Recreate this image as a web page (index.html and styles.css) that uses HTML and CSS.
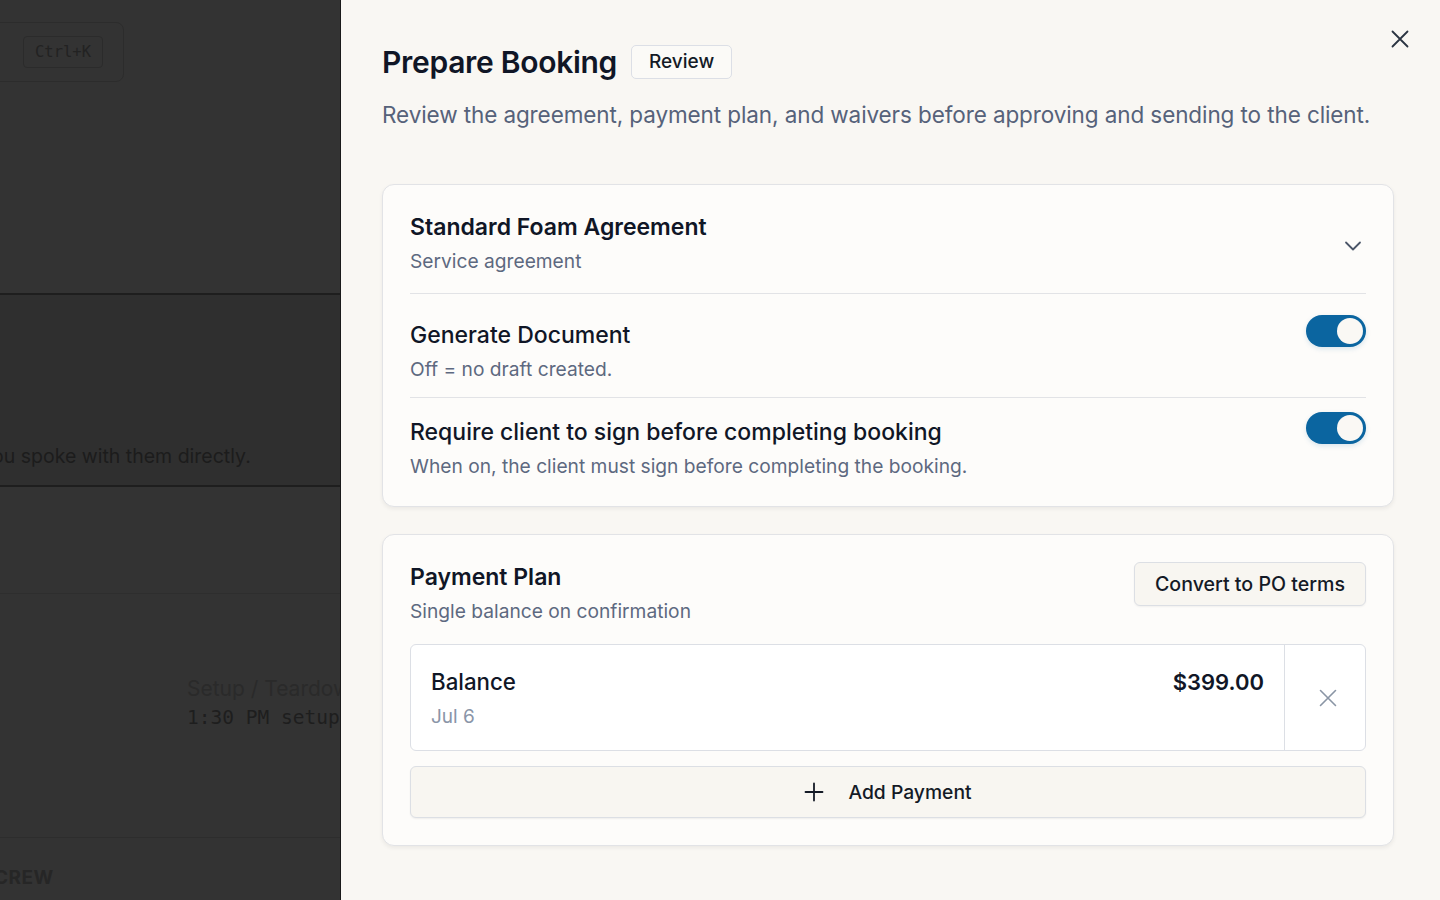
FILE: index.html
```html
<!DOCTYPE html>
<html lang="en">
<head>
  <meta charset="UTF-8" />
  <meta name="viewport" content="width=device-width, initial-scale=1.0"/>
  <title>Prepare Booking</title>
  <link rel="stylesheet" href="styles.css">
</head>
<body>
  <div class="backdrop">
    <div class="bg-search">
      <span class="kbd">Ctrl+K</span>
    </div>
    <div class="bg-block bg-top"></div>
    <div class="bg-block bg-note">
      <p>ou spoke with them directly.</p>
    </div>
    <div class="bg-block bg-schedule">
      <div class="bg-setup">
        <div class="setup-title">Setup / Teardown</div>
        <div class="setup-time">1:30 PM setup</div>
      </div>
    </div>
    <div class="bg-crew">CREW</div>
  </div>

  <aside class="drawer">
    <button class="close-btn" aria-label="Close">
      <svg width="20" height="20" viewBox="0 0 20 20" fill="none" stroke="#2b3442" stroke-width="1.8" stroke-linecap="round">
        <path d="M2.5 2.5 L17.5 17.5 M17.5 2.5 L2.5 17.5"/>
      </svg>
    </button>

    <div class="drawer-header">
      <h1>Prepare Booking</h1>
      <span class="badge">Review</span>
    </div>
    <p class="drawer-sub">Review the agreement, payment plan, and waivers before approving and sending to the client.</p>

    <!-- Agreement -->
    <section class="card">
      <div class="row row-head">
        <div>
          <h2>Standard Foam Agreement</h2>
          <div class="muted">Service agreement</div>
        </div>
        <svg class="chevron" width="20" height="20" viewBox="0 0 20 20" fill="none" stroke="#4b5668" stroke-width="1.8" stroke-linecap="round" stroke-linejoin="round">
          <path d="M3 6.5 L10 13.5 L17 6.5"/>
        </svg>
      </div>

      <div class="row row-option">
        <div>
          <h3>Generate Document</h3>
          <div class="muted">Off = no draft created.</div>
        </div>
        <span class="toggle on"><span class="knob"></span></span>
      </div>

      <div class="row row-option">
        <div>
          <h3>Require client to sign before completing booking</h3>
          <div class="muted">When on, the client must sign before completing the booking.</div>
        </div>
        <span class="toggle on"><span class="knob"></span></span>
      </div>
    </section>

    <!-- Payment plan -->
    <section class="card card-pay">
      <div class="pay-head">
        <div>
          <h2>Payment Plan</h2>
          <div class="muted">Single balance on confirmation</div>
        </div>
        <button class="btn-outline">Convert to PO terms</button>
      </div>

      <div class="payment">
        <div class="payment-main">
          <div>
            <div class="payment-name">Balance</div>
            <div class="payment-date">Jul 6</div>
          </div>
          <div class="payment-amount">$399.00</div>
        </div>
        <button class="payment-remove" aria-label="Remove">
          <svg width="20" height="20" viewBox="0 0 20 20" fill="none" stroke="#8a95a5" stroke-width="1.6" stroke-linecap="round">
            <path d="M2.5 2.5 L17.5 17.5 M17.5 2.5 L2.5 17.5"/>
          </svg>
        </button>
      </div>

      <button class="btn-add">
        <svg width="20" height="20" viewBox="0 0 20 20" fill="none" stroke="#141a26" stroke-width="1.8" stroke-linecap="round">
          <path d="M10 1.5 V18.5 M1.5 10 H18.5"/>
        </svg>
        Add Payment
      </button>
    </section>
  </aside>
</body>
</html>
```

FILE: styles.css
```css
* {
  box-sizing: border-box;
}

body {
  margin: 0;
  height: 100vh;
  display: flex;
  overflow: hidden;
  font-family: 'Inter', 'Lato', sans-serif;
  color: #141a26;
}

/* Dimmed page behind the drawer */
.backdrop {
  width: 340px;
  flex-shrink: 0;
  background: #333333;
  display: flex;
  flex-direction: column;
  overflow: hidden;
  color: #1f1f1f;
}

.bg-search {
  margin: 22px 0 0 -20px;
  width: 144px;
  height: 60px;
  border: 1px solid #2c2c2c;
  border-radius: 8px;
  display: flex;
  align-items: center;
  padding-left: 42px;
}

.kbd {
  font-family: 'DejaVu Sans Mono', monospace;
  font-size: 15.5px;
  line-height: 18px;
  border: 1px solid #2b2b2b;
  border-radius: 4px;
  padding: 6px 11px;
  color: #222;
}

.bg-block {
  border-bottom: 2px solid #1e1e1e;
}

.bg-top {
  height: 213px;
}

.bg-note {
  height: 192px;
  background: #2f2f2f;
  display: flex;
  align-items: flex-end;
}

.bg-note p {
  margin: 0 0 17px -8px;
  font-size: 19.5px;
  color: #1c1c1c;
  white-space: nowrap;
}

.bg-schedule {
  height: 351px;
  border-bottom: 1px solid #2d2d2d;
}

.bg-schedule::before {
  content: '';
  display: block;
  margin-top: 106px;
  border-top: 1px solid #2e2e2e;
}

.bg-setup {
  margin: 82px 0 0 187px;
  white-space: nowrap;
}

.setup-title {
  font-size: 21px;
  color: #2a2a2a;
}

.setup-time {
  font-family: 'DejaVu Sans Mono', monospace;
  font-size: 19.5px;
  color: #1e1e1e;
  margin-top: 5px;
}

.bg-crew {
  margin: 28px 0 0 -6px;
  font-size: 19px;
  font-weight: 700;
  color: #262626;
  letter-spacing: 0.5px;
}

/* Drawer */
.drawer {
  flex: 1;
  background: #f9f7f3;
  border-left: 1px solid #1a1a1a;
  padding: 44px 46px 0 41px;
  position: relative;
}

.close-btn {
  position: absolute;
  top: 29px;
  right: 30px;
  background: none;
  border: none;
  padding: 0;
  cursor: pointer;
  display: flex;
}

.drawer-header {
  display: flex;
  align-items: center;
  gap: 14px;
  height: 36px;
}

.drawer-header h1 {
  margin: 0;
  font-size: 30px;
  line-height: 36px;
  font-weight: 600;
  letter-spacing: -0.3px;
  color: #101626;
}

.badge {
  border: 1px solid #dcdfe6;
  border-radius: 5px;
  padding: 5px 17px;
  font-size: 19px;
  line-height: 22px;
  font-weight: 500;
  color: #141a26;
  background: #fbfaf7;
}

.drawer-sub {
  margin: 21px 0 55px 0;
  font-size: 22.5px;
  line-height: 28px;
  color: #56627a;
  letter-spacing: -0.1px;
}

.card {
  background: #fdfcfa;
  border: 1px solid #e2e3e6;
  border-radius: 12px;
  box-shadow: 0 2px 4px rgba(0,0,0,0.06);
  padding: 0 27px;
  margin-bottom: 27px;
}

.card h2 {
  margin: 0 0 8px 0;
  font-size: 23px;
  line-height: 28px;
  font-weight: 600;
  color: #101626;
}

.card h3 {
  margin: 0 0 8px 0;
  font-size: 23px;
  line-height: 28px;
  font-weight: 500;
  color: #101626;
}

.muted {
  font-size: 19.2px;
  line-height: 24px;
  color: #5d6980;
}

.row {
  display: flex;
  justify-content: space-between;
}

.row-head {
  align-items: center;
  padding: 28px 0 20px 0;
  border-bottom: 1px solid #e2e3e6;
}

.chevron {
  margin: 6px 3px 0 0;
}

.row-option {
  padding: 27px 0 16px 0;
}

.row-option + .row-option {
  border-top: 1px solid #e2e3e6;
  padding-top: 20px;
  padding-bottom: 28px;
}

.toggle {
  width: 60px;
  height: 32px;
  margin-top: -6px;
  border-radius: 16px;
  background: #0b65a0;
  padding: 3px;
  display: flex;
  justify-content: flex-end;
  flex-shrink: 0;
  box-shadow: 0 2px 5px rgba(11,101,160,0.15);
}

.knob {
  width: 26px;
  height: 26px;
  border-radius: 50%;
  background: #faf8f4;
}

/* Payment plan */
.card-pay {
  padding-top: 27px;
  padding-bottom: 27px;
}

.pay-head {
  display: flex;
  justify-content: space-between;
  align-items: flex-start;
  margin-bottom: 21px;
}

.pay-head h2 {
  margin-top: 1px;
}

.btn-outline {
  font-family: inherit;
  font-size: 19.6px;
  line-height: 24px;
  font-weight: 500;
  color: #141a26;
  background: #f8f6f1;
  border: 1px solid #dcdfe4;
  border-radius: 6px;
  padding: 9px 20px;
  box-shadow: 0 1px 2px rgba(0,0,0,0.05);
}

.payment {
  display: flex;
  background: #ffffff;
  border: 1px solid #dcdfe5;
  border-radius: 6px;
  height: 107px;
}

.payment-main {
  flex: 1;
  display: flex;
  justify-content: space-between;
  align-items: flex-start;
  padding: 23px 20px 0 20px;
  border-right: 1px solid #dcdfe5;
}

.payment-name {
  font-size: 22.3px;
  line-height: 28px;
  font-weight: 500;
  color: #101626;
  margin-bottom: 9px;
}

.payment-date {
  font-size: 19px;
  line-height: 24px;
  color: #8a95a8;
}

.payment-amount {
  font-size: 22px;
  line-height: 28px;
  font-weight: 600;
  color: #101626;
}

.payment-remove {
  width: 80px;
  padding: 0 0 0 5px;
  background: none;
  border: none;
  display: flex;
  align-items: center;
  justify-content: center;
  cursor: pointer;
}

.btn-add {
  margin-top: 15px;
  width: 100%;
  height: 52px;
  display: flex;
  align-items: center;
  justify-content: center;
  gap: 24px;
  font-family: inherit;
  font-size: 19.3px;
  font-weight: 500;
  color: #141a26;
  background: #f8f6f1;
  border: 1px solid #dcdfe4;
  border-radius: 6px;
  box-shadow: 0 1px 2px rgba(0,0,0,0.06);
  cursor: pointer;
}
```
